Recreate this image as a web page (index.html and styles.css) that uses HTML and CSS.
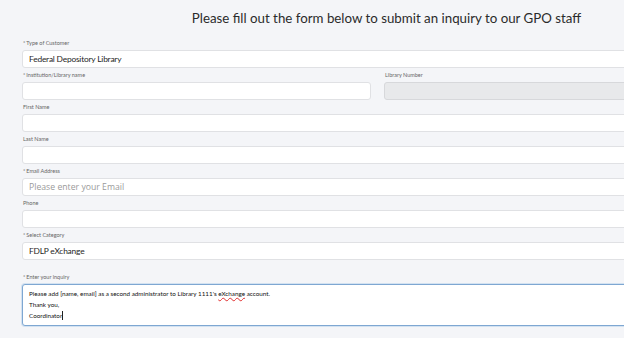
FILE: index.html
```html
<!DOCTYPE html>
<html lang="en">
<head>
  <meta charset="UTF-8" />
  <meta name="viewport" content="width=device-width, initial-scale=1.0"/>
  <title>Ask GPO - Inquiry Form</title>
  <link rel="stylesheet" href="styles.css">
</head>
<body>
  <div class="form-wrap">
    <h1>Please fill out the form below to submit an inquiry to our GPO staff</h1>

    <div class="field">
      <label><span class="req">*</span>Type of Customer</label>
      <div class="input">Federal Depository Library</div>
    </div>

    <div class="row">
      <div class="field">
        <label><span class="req">*</span>Institution/Library name</label>
        <div class="input"></div>
      </div>
      <div class="field">
        <label>Library Number</label>
        <div class="input disabled"></div>
      </div>
    </div>

    <div class="field">
      <label>First Name</label>
      <div class="input"></div>
    </div>

    <div class="field">
      <label>Last Name</label>
      <div class="input"></div>
    </div>

    <div class="field">
      <label><span class="req">*</span>Email Address</label>
      <div class="input placeholder">Please enter your Email</div>
    </div>

    <div class="field">
      <label>Phone</label>
      <div class="input"></div>
    </div>

    <div class="field">
      <label><span class="req">*</span>Select Category</label>
      <div class="input">FDLP eXchange</div>
    </div>

    <div class="field inquiry">
      <label><span class="req">*</span>Enter your inquiry</label>
      <div class="textarea">
        Please add [name, email] as a second administrator to Library 1111's <span class="typo">eXchange</span> account.<br>
        Thank you,<br>
        Coordinator<span class="caret"></span>
      </div>
    </div>
  </div>
</body>
</html>
```

FILE: styles.css
```css
html, body {
  margin: 0;
  overflow: hidden;
}

body {
  font-family: Lato, 'Open Sans', sans-serif;
  background-color: #f4f5f8;
  color: #333;
  height: 338px;
}

.form-wrap {
  width: 711px;
  margin-left: 22px;
  display: flex;
  flex-direction: column;
  gap: 3px;
}

h1 {
  font-size: 13.3px;
  font-weight: 400;
  line-height: 20px;
  text-align: center;
  color: #2b2b2b;
  margin: 8px 0 8px 18px;
}

.row {
  display: grid;
  grid-template-columns: 1fr 1fr;
  gap: 13px;
}

.field {
  display: flex;
  flex-direction: column;
}

label {
  font-size: 5.5px;
  line-height: 8px;
  color: #666;
  margin-bottom: 3px;
  padding-left: 1px;
}

.req {
  margin-right: 1px;
}

.input {
  height: 16px;
  background-color: #fff;
  border: 1px solid #e0e1e4;
  border-radius: 3px;
  padding: 0 6px;
  font-size: 8.4px;
  letter-spacing: -0.2px;
  line-height: 16px;
  color: #1e1e1e;
}

.input.disabled {
  background-color: #e8e9eb;
  border-color: #d7d8db;
}

.input.placeholder {
  color: #9a9a9a;
  font-family: 'Open Sans', sans-serif;
  font-size: 8.7px;
  letter-spacing: 0;
}

.inquiry {
  margin-top: 10px;
}

.textarea {
  height: 36px;
  background-color: #fff;
  border: 1px solid #7ea7d2;
  box-shadow: 0 0 0 1px #d3e2f1;
  border-radius: 3px;
  padding: 3px 6px 1px;
  font-size: 6.3px;
  line-height: 11px;
  color: #111;
}

.typo {
  text-decoration: underline wavy #e03030;
  text-decoration-thickness: 0.5px;
}

.caret {
  display: inline-block;
  width: 1px;
  height: 9px;
  background-color: #222;
  vertical-align: -2px;
}
```
